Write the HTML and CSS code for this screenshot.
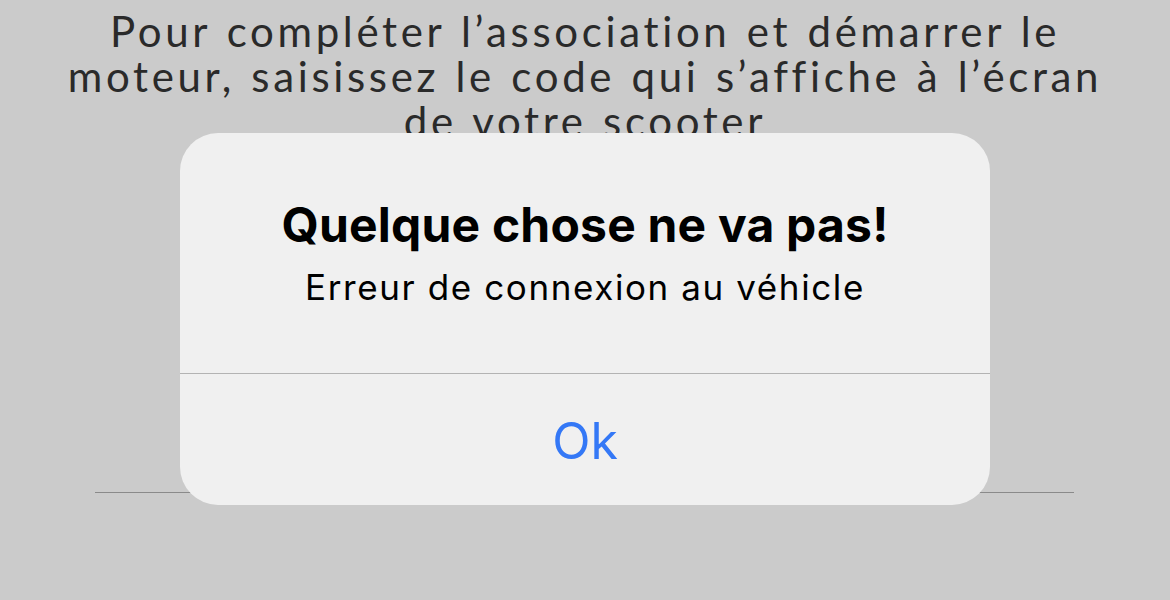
FILE: index.html
```html
<!DOCTYPE html>
<html lang="fr">
<head>
<meta charset="utf-8">
<link rel="stylesheet" href="styles.css">
</head>
<body>
<main class="screen">
  <p class="intro">
    <span class="line">Pour compléter l’association et démarrer le</span>
    <span class="line">moteur, saisissez le code qui s’affiche à l’écran</span>
    <span class="line">de votre scooter</span>
  </p>
  <div class="field"></div>
</main>
<div class="alert" role="alertdialog">
  <div class="alert-body">
    <h1 class="alert-title">Quelque chose ne va pas!</h1>
    <p class="alert-message">Erreur de connexion au véhicle</p>
  </div>
  <button class="alert-button">Ok</button>
</div>
</body>
</html>
```

FILE: styles.css
```css
html, body {
  margin: 0;
  padding: 0;
  background: #cbcbcb;
  height: 600px;
  overflow: hidden;
}
.screen {
  display: flex;
  flex-direction: column;
  align-items: center;
}
.intro {
  margin: 9px 0 0;
  font-family: Lato, "Open Sans", sans-serif;
  font-weight: 400;
  font-size: 42px;
  line-height: 45px;
  color: #2a2a2a;
  text-align: center;
  letter-spacing: 3.65px;
  word-spacing: 2px;
}
.line {
  display: block;
  white-space: nowrap;
}
.field {
  width: 979px;
  height: 1px;
  background: #8a8a8a;
  margin-top: 348px;
  margin-left: -1px;
}
.alert {
  position: absolute;
  left: 180px;
  top: 133px;
  width: 810px;
  height: 372px;
  background: #f0f0f0;
  border-radius: 38px;
  display: flex;
  flex-direction: column;
  overflow: hidden;
}
.alert-body {
  height: 241px;
  border-bottom: 1px solid #b3b3b3;
  display: flex;
  flex-direction: column;
  align-items: center;
  box-sizing: border-box;
  padding-top: 64px;
  font-family: Inter, Roboto, sans-serif;
}
.alert-title {
  margin: 0;
  font-size: 48px;
  font-weight: 700;
  line-height: 56px;
  color: #000;
  letter-spacing: 0.2px;
}
.alert-message {
  margin: 12px 0 0;
  font-size: 35px;
  line-height: 44px;
  font-weight: 400;
  color: #000;
  letter-spacing: 1.6px;
}
.alert-button {
  flex: 1;
  border: 0;
  background: transparent;
  font-family: Inter, Roboto, sans-serif;
  font-size: 50px;
  color: #3478f6;
  padding: 2px 0 0;
  margin: 0;
}
```
